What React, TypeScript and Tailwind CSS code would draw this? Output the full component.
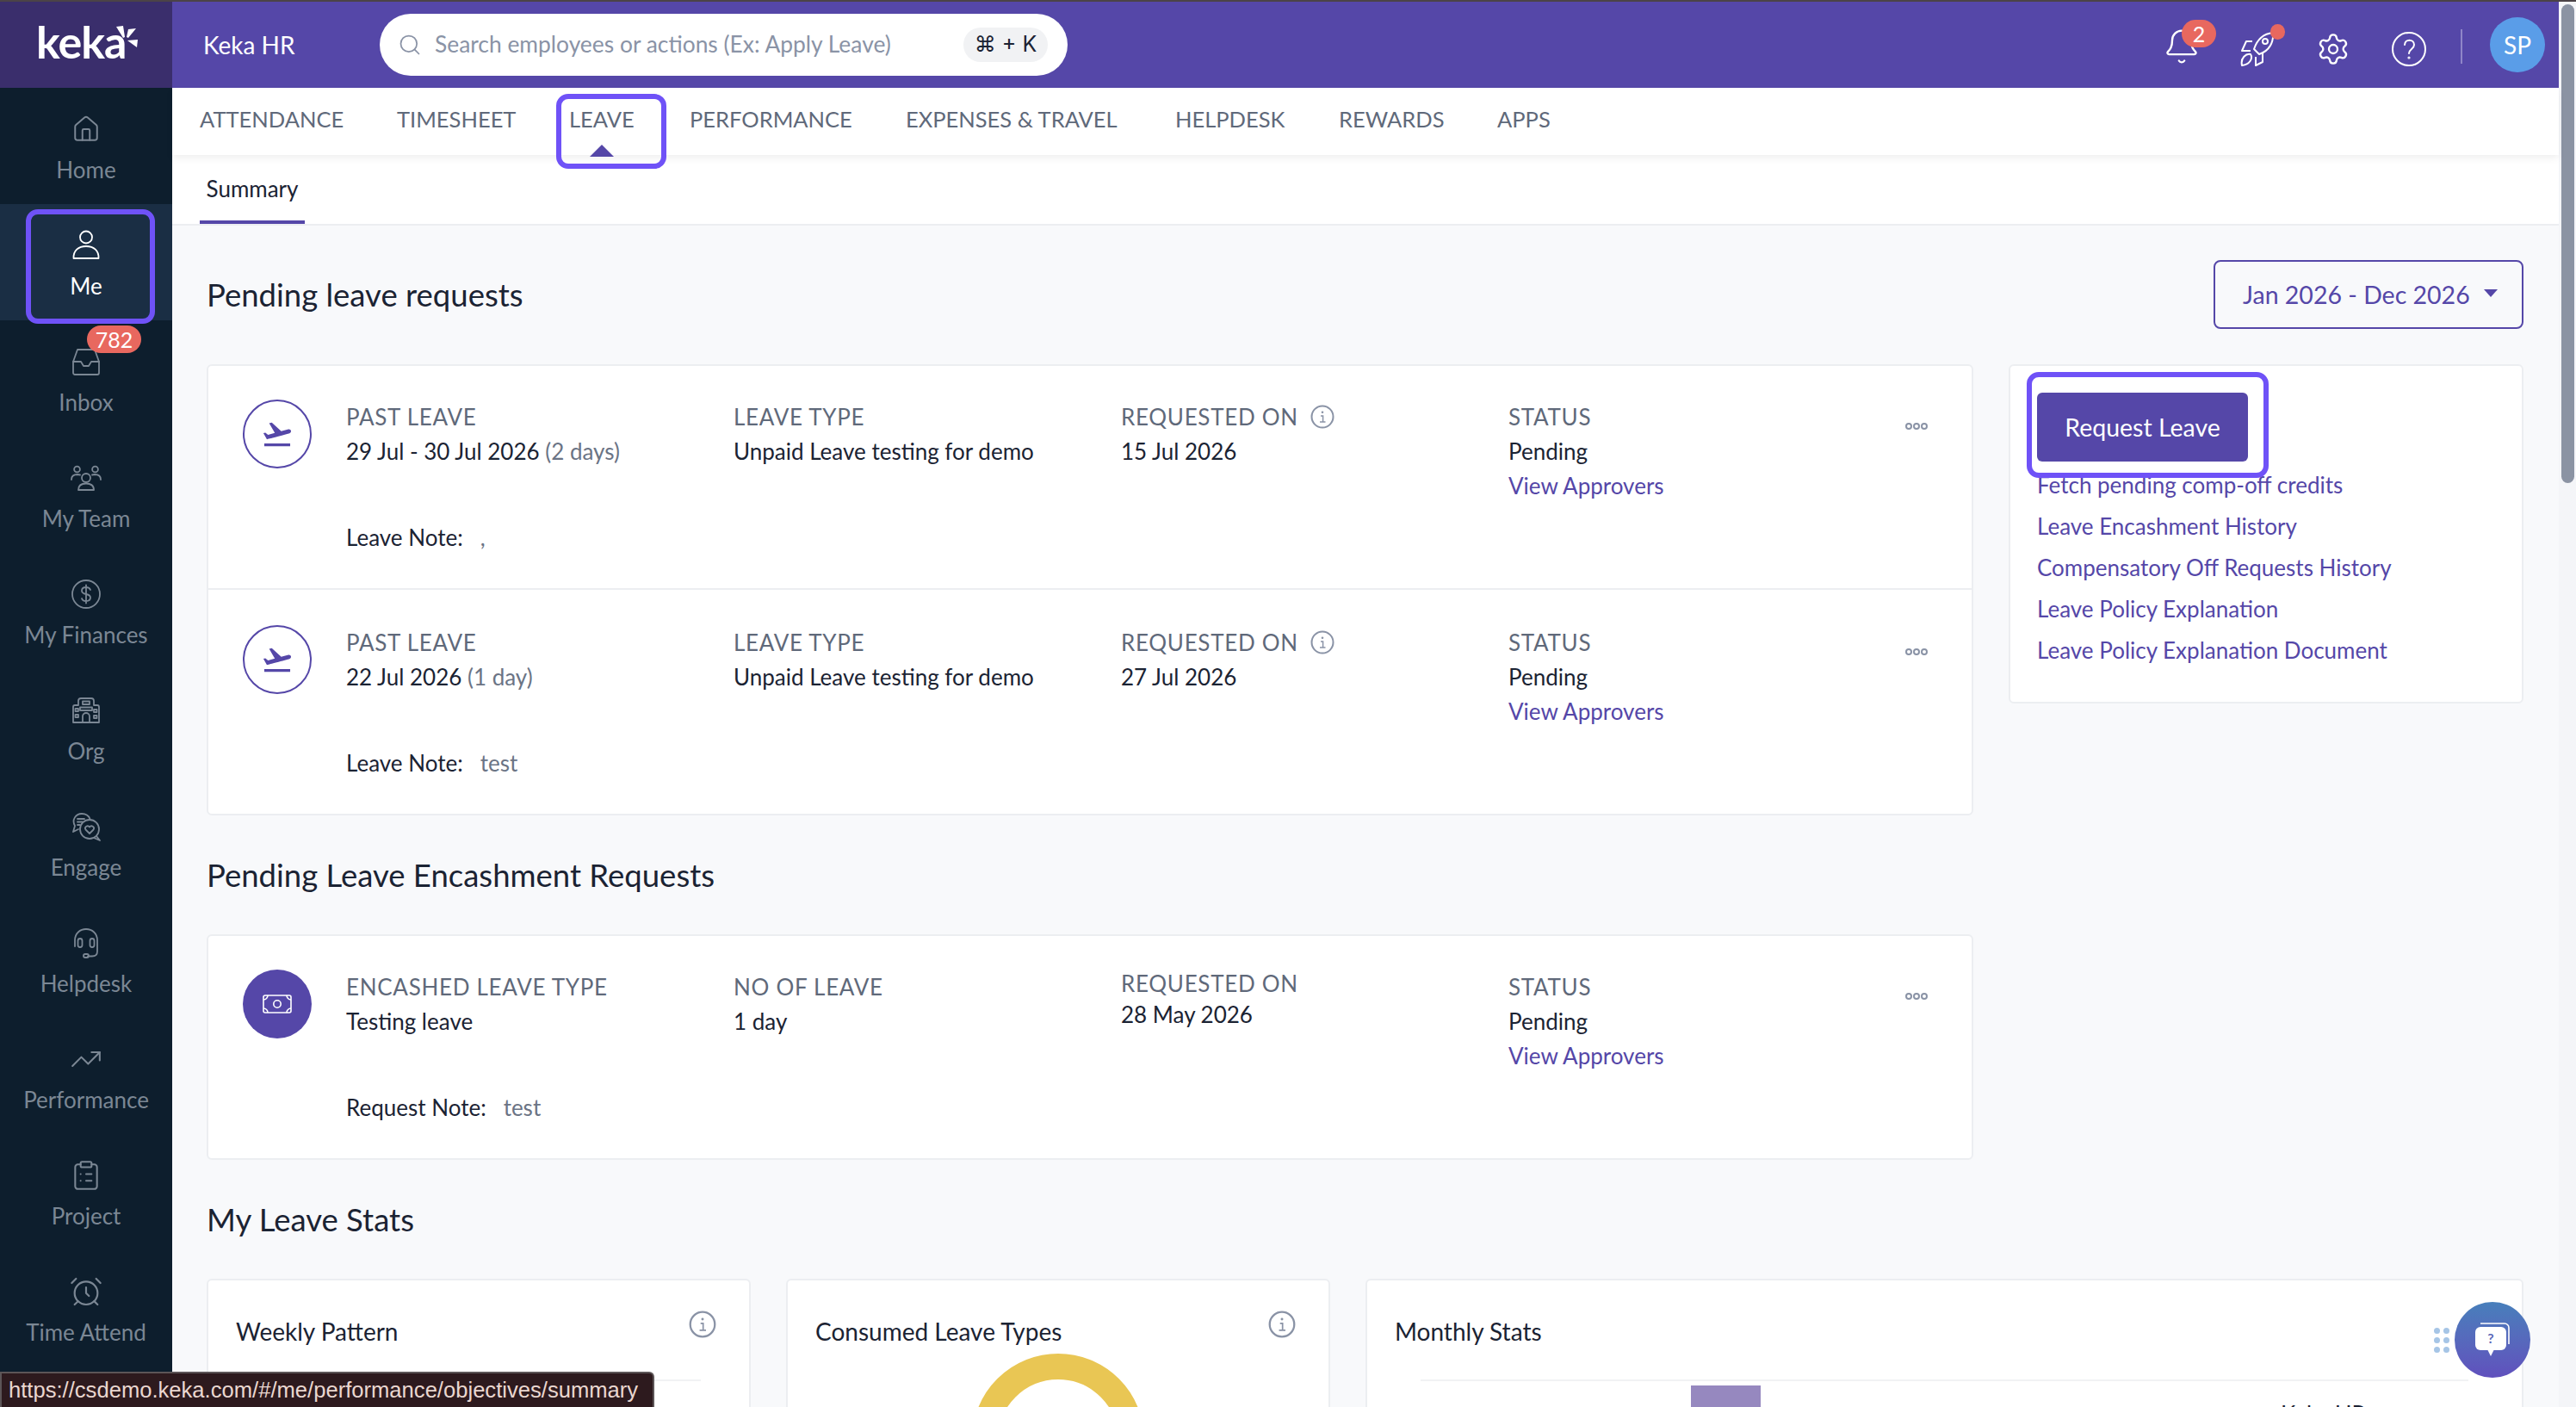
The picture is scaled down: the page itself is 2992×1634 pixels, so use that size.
import React from 'react';
import { Home, Search, Settings, TrendingUp, AlarmClock, ClipboardList, Bell } from 'lucide-react';
import { MdFlightTakeoff } from 'react-icons/md';

const Highlight = ({ className }: { className: string }) => (
  <div className={`absolute border-[6px] border-[#6f52f7] rounded-[14px] pointer-events-none z-20 ${className}`} />
);

const SvgIcon = ({ children, className = 'w-[36px] h-[36px]' }: { children: React.ReactNode; className?: string }) => (
  <svg viewBox="0 0 36 36" fill="none" stroke="currentColor" strokeWidth="1.8" strokeLinecap="round" strokeLinejoin="round" className={className}>
    {children}
  </svg>
);

const MeIcon = () => (
  <SvgIcon>
    <circle cx="18" cy="8.5" r="7" />
    <path d="M3.5 33 C3 24 9 19 18 19 C27 19 33 24 32.5 33 Z" />
  </SvgIcon>
);
const InboxIcon = () => (
  <SvgIcon>
    <path d="M8 4 H28 L33 18 V31 a2 2 0 0 1 -2 2 H5 a2 2 0 0 1 -2 -2 V18 Z" />
    <path d="M3 18 H12 L15 23 H21 L24 18 H33" />
  </SvgIcon>
);
const TeamIcon = () => (
  <SvgIcon>
    <circle cx="18" cy="18" r="5" />
    <circle cx="7.5" cy="8" r="3.4" />
    <circle cx="28.5" cy="8" r="3.4" />
    <path d="M9 32 C9 26 13 24.5 18 24.5 C23 24.5 27 26 27 32 Z" />
    <path d="M1 20 C1 15.5 4 14 8 14 L11 14.5 M35 20 C35 15.5 32 14 28 14 L25 14.5" />
  </SvgIcon>
);
const FinanceIcon = () => (
  <SvgIcon>
    <circle cx="18" cy="18" r="16" />
    <path d="M23 13 C22 10.5 20 10 18 10 C15 10 13 11.5 13 14 C13 20 23 16 23 22 C23 24.5 21 26 18 26 C15.5 26 13.5 25 13 23 M18 7.5 V28.5" />
  </SvgIcon>
);
const OrgIcon = () => (
  <SvgIcon>
    <path d="M3 32 V14 a2 2 0 0 1 2 -2 H9 V7 a3 3 0 0 1 3 -3 H24 a3 3 0 0 1 3 3 V12 H31 a2 2 0 0 1 2 2 V32 Z" />
    <rect x="14" y="7.5" width="8" height="3.5" />
    <rect x="11" y="14.5" width="14" height="3.5" />
    <rect x="5.5" y="16" width="3.5" height="3" />
    <rect x="5.5" y="23" width="3.5" height="3" />
    <rect x="27" y="17" width="3.5" height="3" />
    <rect x="27" y="24" width="3.5" height="3" />
    <path d="M14 32 V25 a4 4 0 0 1 8 0 V32" />
  </SvgIcon>
);
const EngageIcon = () => (
  <SvgIcon>
    <path d="M9 21 L3 24 L5 17 C1 10 6 3 13 3 C18 3 21 5.5 22.5 9" />
    <path d="M8 9 H16 M8 12.5 H14 M8 16 H11" />
    <circle cx="22" cy="21" r="11" />
    <path d="M30 29 L34 34 L27 31" />
    <path d="M22 26 L17.5 21.5 C15.5 18.5 20 15.5 22 18.5 C24 15.5 28.5 18.5 26.5 21.5 Z" />
  </SvgIcon>
);
const HelpdeskIcon = () => (
  <SvgIcon>
    <path d="M5 22 V15 C5 7 11 2 18 2 C25 2 31 7 31 15 V28 C31 32 28 33.5 25 33.5 H20" />
    <rect x="8.5" y="13" width="5" height="10" rx="2.5" />
    <rect x="22.5" y="13" width="5" height="10" rx="2.5" />
    <rect x="15" y="31" width="6" height="4" rx="2" />
  </SvgIcon>
);

const InfoIcon = ({ className = '' }: { className?: string }) => (
  <svg viewBox="0 0 28 28" fill="none" className={`w-[28px] h-[28px] shrink-0 ${className}`}>
    <circle cx="14" cy="14" r="12.5" stroke="#8a93a6" strokeWidth="2" />
    <circle cx="14" cy="8.8" r="1.3" fill="#8a93a6" />
    <path d="M12 13 H14.6 V19.5 M11 20 H17.5" stroke="#8a93a6" strokeWidth="1.5" />
  </svg>
);

const navItems = [
  { label: 'Home', icon: <Home className="w-[34px] h-[34px]" strokeWidth={1.4} /> },
  { label: 'Me', icon: <MeIcon />, active: true },
  { label: 'Inbox', icon: <InboxIcon />, badge: '782' },
  { label: 'My Team', icon: <TeamIcon /> },
  { label: 'My Finances', icon: <FinanceIcon /> },
  { label: 'Org', icon: <OrgIcon /> },
  { label: 'Engage', icon: <EngageIcon /> },
  { label: 'Helpdesk', icon: <HelpdeskIcon /> },
  { label: 'Performance', icon: <TrendingUp className="w-[38px] h-[38px]" strokeWidth={1.3} /> },
  { label: 'Project', icon: <ClipboardList className="w-[38px] h-[38px]" strokeWidth={1.3} /> },
  { label: 'Time Attend', icon: <AlarmClock className="w-[40px] h-[40px]" strokeWidth={1.3} /> },
];

const tabs = [
  { label: 'ATTENDANCE', width: 'w-[229px]' },
  { label: 'TIMESHEET', width: 'w-[200px]' },
  { label: 'LEAVE', width: 'w-[140px]' },
  { label: 'PERFORMANCE', width: 'w-[251px]' },
  { label: 'EXPENSES & TRAVEL', width: 'w-[313px]' },
  { label: 'HELPDESK', width: 'w-[190px]' },
  { label: 'REWARDS', width: 'w-[184px]' },
  { label: 'APPS', width: 'w-[70px]' },
];

const sideLinks = [
  'Fetch pending comp-off credits',
  'Leave Encashment History',
  'Compensatory Off Requests History',
  'Leave Policy Explanation',
  'Leave Policy Explanation Document',
];

const Label = ({ children }: { children: React.ReactNode }) => (
  <div className="h-[40px] leading-[40px] text-[26px] tracking-[0.7px] text-[#5f697a] whitespace-nowrap flex items-center gap-[14px]">{children}</div>
);

const Value = ({ children }: { children: React.ReactNode }) => (
  <div className="h-[40px] leading-[40px] text-[26px] text-[#1b2333] whitespace-nowrap">{children}</div>
);

const Dots = () => (
  <div className="flex gap-[1px] mt-[27px] shrink-0 w-[27px]">
    <span className="w-[8px] h-[8px] rounded-full border-2 border-[#8a93a6]" />
    <span className="w-[8px] h-[8px] rounded-full border-2 border-[#8a93a6]" />
    <span className="w-[8px] h-[8px] rounded-full border-2 border-[#8a93a6]" />
  </div>
);

const LeaveRow = ({ dates, days, note, first, requested }: { dates: string; days: string; note: string; first?: boolean; requested: string }) => (
  <div className={`flex h-[260px] pl-[40px] pr-[50px] ${first ? 'pt-[39px] border-b-2 border-[#eceef1]' : 'pt-[41px]'}`}>
    <div className="w-[80px] h-[80px] rounded-full border-2 border-[#5547a8] flex items-center justify-center shrink-0 mr-[40px]">
      <MdFlightTakeoff className="text-[#5547a8] w-[38px] h-[38px]" />
    </div>
    <div className="w-[450px]">
      <Label>PAST LEAVE</Label>
      <Value>
        {dates} <span className="text-[#6b7485]">{days}</span>
      </Value>
      <div className="h-[40px] leading-[40px] text-[26px] text-[#1b2333] mt-[60px] whitespace-nowrap">
        Leave Note:<span className="text-[#6b7485] ml-[20px]">{note}</span>
      </div>
    </div>
    <div className="w-[450px]">
      <Label>LEAVE TYPE</Label>
      <Value>Unpaid Leave testing for demo</Value>
    </div>
    <div className="w-[450px]">
      <Label>
        REQUESTED ON <InfoIcon />
      </Label>
      <Value>{requested}</Value>
    </div>
    <div className="flex-1">
      <Label>STATUS</Label>
      <Value>Pending</Value>
      <div className="h-[40px] leading-[40px] text-[26px] text-[#5547a8]">View Approvers</div>
    </div>
    <Dots />
  </div>
);

const SectionTitle = ({ children }: { children: React.ReactNode }) => (
  <h2 className="h-[138px] flex items-center text-[36.5px] font-normal text-[#1b2333]">{children}</h2>
);

const StatCard = ({ title, className, children, info = true }: { title: string; className: string; children?: React.ReactNode; info?: boolean }) => (
  <div className={`relative bg-white border-2 border-[#eceef1] rounded-[6px] h-[320px] overflow-hidden ${className}`}>
    <div className="flex items-start justify-between pl-[32px] pr-[38px] h-[115px] pt-[39px]">
      <span className="text-[28px] leading-[40px] text-[#1b2333]">{title}</span>
      {info && <InfoIcon className="w-[32px] h-[32px] -mt-[4px]" />}
    </div>
    {children}
  </div>
);

const App = () => {
  return (
    <div className="relative h-[1634px] w-full overflow-hidden bg-[#f8f9fb] font-['Lato','Liberation_Sans',sans-serif]">
      <div className="h-[2px] bg-[#4b4347]" />
      <div className="flex h-[1632px]">
        {/* Sidebar */}
        <aside className="w-[200px] shrink-0 bg-[#0d1e2d] flex flex-col">
          <div className="h-[100px] bg-[#3a2e6c] flex items-center pl-[42px] relative">
            <span className="text-white font-bold text-[52px] leading-none tracking-[-1px] -mt-[8px]">keka</span>
            <svg viewBox="0 0 28 30" className="absolute left-[134px] top-[26px] w-[28px] h-[30px]" fill="white">
              <polygon points="1,3 9,2 11,15 9,16" />
              <polygon points="15,6 24,5 15,16 13,15" />
              <polygon points="14,19 26,18 25,27" />
            </svg>
          </div>
          {navItems.map((item) => (
            <div key={item.label} className={`relative h-[135px] shrink-0 flex flex-col items-center pt-[30px] ${item.active ? 'bg-[#1a2e44] text-white' : 'text-[#7b8794]'}`}>
              <div className="h-[36px] flex items-center justify-center">{item.icon}</div>
              <div className="mt-[14px] h-[30px] leading-[30px] text-[26px] whitespace-nowrap">{item.label}</div>
              {item.badge && (
                <span className="absolute left-[101px] top-[6px] w-[63px] h-[32px] rounded-full bg-[#e8685f] text-white text-[25px] leading-[32px] text-center z-10">{item.badge}</span>
              )}
            </div>
          ))}
        </aside>

        {/* Main column */}
        <div className="flex-1 min-w-0 flex flex-col">
          <header className="h-[100px] shrink-0 bg-[#5547a8] flex items-center text-white">
            <span className="ml-[36px] text-[28px] w-[205px] whitespace-nowrap">Keka HR</span>
            <div className="h-[72px] w-[799px] bg-white rounded-full flex items-center pl-[21px] pr-[23px]">
              <Search className="w-[28px] h-[28px] text-[#8a93a6]" strokeWidth={1.5} />
              <span className="ml-[15px] text-[26.4px] text-[#8a93a6] whitespace-nowrap">Search employees or actions (Ex: Apply Leave)</span>
              <span className="ml-auto w-[98px] h-[40px] rounded-full bg-[#f1f2f4] text-[#1b2333] text-[25px] flex items-center justify-center font-['Inter',sans-serif]">⌘ + K</span>
            </div>
            <div className="ml-auto flex items-center h-full">
              <div className="relative w-[40px] h-[40px] mr-[48px] mt-[2px]">
                <Bell className="w-[44px] h-[44px] -ml-[2px] -mt-[1px]" strokeWidth={1.3} />
                <span className="absolute left-[20px] -top-[10px] w-[40px] h-[32px] rounded-full bg-[#e8685f] text-[25px] leading-[32px] text-center">2</span>
              </div>
              <div className="relative w-[40px] h-[40px] mr-[48px] mt-[10px]">
                <svg viewBox="0 0 40 40" fill="none" stroke="white" strokeWidth="2" strokeLinejoin="round" className="w-[40px] h-[40px]">
                  <path d="M38 1 C28 2 20 8 16 20 L22 26 C34 22 39 12 38 1 Z" />
                  <circle cx="29" cy="11" r="3" />
                  <path d="M14 11 H7 L2 22 H12" />
                  <path d="M26 24 V35 L18 39 V29" />
                  <path d="M2 39 C0 30 7 25 12 26 C15 31 11 38 2 39 Z" />
                </svg>
                <span className="absolute left-[35px] -top-[9px] w-[17px] h-[18px] rounded-full bg-[#e8685f]" />
              </div>
              <Settings className="w-[40px] h-[40px] mr-[48px] mt-[10px]" strokeWidth={1.4} />
              <svg viewBox="0 0 40 40" fill="none" stroke="white" strokeWidth="2" strokeLinecap="round" className="w-[40px] h-[40px] mr-[40px] mt-[10px]">
                <circle cx="20" cy="20" r="19" />
                <path d="M15 15 C15 8 26 8 26 15 C26 20 20 20 20 25" />
                <circle cx="20" cy="30" r="0.6" />
              </svg>
              <span className="w-[2px] h-[40px] bg-[#8f85c8] mr-[32px] mt-[4px]" />
              <span className="w-[64px] h-[64px] rounded-full bg-[#5a9de8] flex items-center justify-center text-[28px] mr-[16px]">SP</span>
            </div>
          </header>

          {/* Module tabs */}
          <nav className="relative z-10 h-[78px] shrink-0 bg-white shadow-[0_4px_8px_rgba(0,0,0,0.06)] flex pl-[32px] pt-[16px]">
            {tabs.map((tab) => (
              <div key={tab.label} className={`relative h-[40px] leading-[40px] text-[25.5px] text-[#5f697a] whitespace-nowrap ${tab.width}`}>
                {tab.label}
                {tab.label === 'LEAVE' && (
                  <span className="absolute left-[24px] top-[50px] w-0 h-0 border-x-[14px] border-x-transparent border-b-[14px] border-b-[#5547a8]" />
                )}
              </div>
            ))}
          </nav>

          <div className="h-[82px] shrink-0 bg-white border-b-2 border-[#eceef1] pl-[32px]">
            <div className="w-[122px] h-[80px] border-b-4 border-[#5547a8] text-center text-[26px] text-[#1b2333] leading-[78px]">Summary</div>
          </div>

          {/* Page content */}
          <div className="flex-1 min-h-0 overflow-hidden pl-[40px] pr-[41px] pt-[40px]">
            <div className="flex items-center justify-between h-[80px]">
              <h2 className="text-[36.5px] font-normal text-[#1b2333]">Pending leave requests</h2>
              <button className="w-[360px] h-[80px] rounded-[8px] border-2 border-[#5547a8] text-[#5547a8] text-[28.5px] flex items-center pl-[32px]">
                Jan 2026 - Dec 2026
                <span className="ml-[16px] w-0 h-0 border-x-[8px] border-x-transparent border-t-[9px] border-t-[#5547a8] -mt-[4px]" />
              </button>
            </div>

            <div className="flex gap-[41px] mt-[41px] items-start">
              <div className="w-[2052px] shrink-0">
                <div className="bg-white border-2 border-[#eceef1] rounded-[6px]">
                  <LeaveRow dates="29 Jul - 30 Jul 2026" days="(2 days)" note="," requested="15 Jul 2026" first />
                  <LeaveRow dates="22 Jul 2026" days="(1 day)" note="test" requested="27 Jul 2026" />
                </div>

                <SectionTitle>Pending Leave Encashment Requests</SectionTitle>

                <div className="bg-white border-2 border-[#eceef1] rounded-[6px] h-[262px] flex pt-[39px] pl-[40px] pr-[50px]">
                  <div className="w-[80px] h-[80px] rounded-full bg-[#5547a8] flex items-center justify-center shrink-0 mr-[40px]">
                    <svg viewBox="0 0 34 22" fill="none" stroke="white" strokeWidth="1.6" className="w-[34px] h-[22px]">
                      <rect x="1" y="1" width="32" height="20" rx="2" />
                      <circle cx="17" cy="11" r="4.2" />
                      <path d="M1 6 A5 5 0 0 0 6 1 M28 1 A5 5 0 0 0 33 6 M33 16 A5 5 0 0 0 28 21 M6 21 A5 5 0 0 0 1 16" />
                    </svg>
                  </div>
                  <div className="w-[450px]">
                    <Label>ENCASHED LEAVE TYPE</Label>
                    <Value>Testing leave</Value>
                    <div className="h-[40px] leading-[40px] text-[26px] text-[#1b2333] mt-[60px] whitespace-nowrap">
                      Request Note:<span className="text-[#6b7485] ml-[20px]">test</span>
                    </div>
                  </div>
                  <div className="w-[450px]">
                    <Label>NO OF LEAVE</Label>
                    <Value>1 day</Value>
                  </div>
                  <div className="w-[450px] -mt-[4px]">
                    <Label>REQUESTED ON</Label>
                    <div className="-mt-[4px]">
                      <Value>28 May 2026</Value>
                    </div>
                  </div>
                  <div className="flex-1">
                    <Label>STATUS</Label>
                    <Value>Pending</Value>
                    <div className="h-[40px] leading-[40px] text-[26px] text-[#5547a8]">View Approvers</div>
                  </div>
                  <Dots />
                </div>

                <SectionTitle>My Leave Stats</SectionTitle>
              </div>

              {/* Quick actions */}
              <div className="relative flex-1 h-[394px] bg-white border-2 border-[#eceef1] rounded-[6px] pl-[31px] pt-[31px]">
                <button className="w-[245px] h-[80px] bg-[#5547a8] rounded-[6px] text-white text-[28.5px]">Request Leave</button>
                <ul className="mt-[7px]">
                  {sideLinks.map((link) => (
                    <li key={link} className="h-[48px] leading-[40px] text-[26px] text-[#5547a8] whitespace-nowrap">{link}</li>
                  ))}
                </ul>
              </div>
            </div>

            <div className="flex gap-[41px]">
              <StatCard title="Weekly Pattern" className="w-[632px] shrink-0">
                <div className="mx-[32px] h-[2px] bg-[#f1f2f4] w-[540px]" />
              </StatCard>
              <StatCard title="Consumed Leave Types" className="w-[632px] shrink-0">
                <svg viewBox="0 0 200 200" className="absolute left-[214px] top-[85px] w-[200px] h-[200px]" fill="none">
                  <circle cx="100" cy="100" r="85" stroke="#e9c654" strokeWidth="30" />
                </svg>
              </StatCard>
              <StatCard title="Monthly Stats" className="flex-1" info={false}>
                <div className="ml-[62px] h-[2px] bg-[#f1f2f4] w-[1217px]" />
                <div className="absolute left-[376px] top-[122px] w-[81px] h-[100px] bg-[#9688bf]" />
                <span className="absolute left-[1061px] top-[136px] text-[26px] text-[#1b2333] whitespace-nowrap">Keka HR</span>
              </StatCard>
            </div>
          </div>
        </div>

        {/* Scrollbar */}
        <div className="w-[20px] shrink-0 bg-[#f4f5f8] pl-[3px] pt-[3px]">
          <div className="w-[15px] h-[556px] rounded-full bg-[#8b93a3]" />
        </div>
      </div>

      {/* Tutorial highlights */}
      <Highlight className="left-[30px] top-[243px] w-[150px] h-[133px]" />
      <Highlight className="left-[646px] top-[109px] w-[128px] h-[87px]" />
      <Highlight className="left-[2354px] top-[432px] w-[281px] h-[123px]" />

      {/* Chat launcher */}
      <div className="absolute left-[2827px] top-[1542px] grid grid-cols-2 gap-[4px] z-20">
        {[0, 1, 2, 3, 4, 5].map((i) => (
          <span key={i} className="w-[7px] h-[7px] rounded-full bg-[#a6c5e6]" />
        ))}
      </div>
      <div className="absolute left-[2851px] top-[1512px] w-[88px] h-[88px] rounded-full bg-gradient-to-b from-[#477fbb] to-[#6050bd] flex items-center justify-center z-20">
        <svg viewBox="0 0 44 44" className="w-[44px] h-[44px]" fill="none">
          <path d="M8 3 H36 a5 5 0 0 1 5 5 V27" stroke="white" strokeWidth="1.6" />
          <rect x="2" y="7" width="36" height="27" rx="6" fill="white" />
          <path d="M16 33 L20 41 L24 33 Z" fill="white" />
          <text x="20" y="26" textAnchor="middle" fontSize="16" fontWeight="700" fill="#5a68b8">?</text>
        </svg>
      </div>

      {/* Browser status bar */}
      <div className="absolute left-0 bottom-0 w-[760px] h-[41px] bg-[#2d1a1e] border-2 border-b-0 border-[#5c5557] rounded-tr-[6px] pl-[8px] text-[25.6px] leading-[38px] text-[#ead7d0] whitespace-nowrap z-30 font-['Liberation_Sans',sans-serif]">
        https://csdemo.keka.com/#/me/performance/objectives/summary
      </div>
    </div>
  );
};

export default App;
